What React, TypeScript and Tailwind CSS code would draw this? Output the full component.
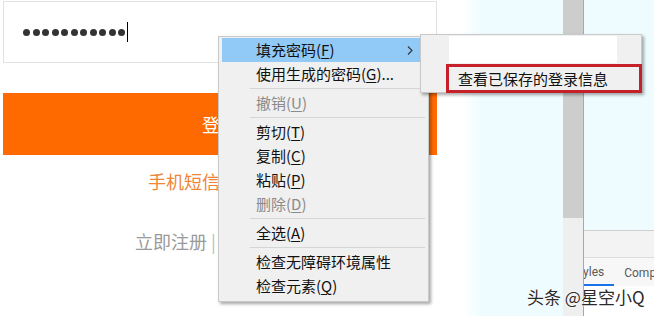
import React from "react"

const Key = ({ k }: { k: string }) => (
  <>
    (<span className="underline underline-offset-[2px] decoration-1">{k}</span>)
  </>
)

const menuItems = [
  { label: "填充密码", key: "F", active: true, sub: true },
  { label: "使用生成的密码", key: "G", tail: "..." },
  { sep: true },
  { label: "撤销", key: "U", disabled: true },
  { sep: true },
  { label: "剪切", key: "T" },
  { label: "复制", key: "C" },
  { label: "粘贴", key: "P" },
  { label: "删除", key: "D", disabled: true },
  { sep: true },
  { label: "全选", key: "A" },
  { sep: true },
  { label: "检查无障碍环境属性" },
  { label: "检查元素", key: "Q" },
]

const ContextMenu = () => (
  <div className="absolute left-[218px] top-[36px] w-[211px] bg-[#f0f0f0] border border-[#c9c9c9] shadow-[2px_2px_3px_rgba(0,0,0,0.35)] pt-[1px] pb-[3px] pl-[3px] pr-[2px]">
    {menuItems.map((it, i) =>
      it.sep ? (
        <div key={i} className="h-[5px] flex items-center">
          <div className="ml-[28px] mr-[1px] flex-1 h-px bg-[#d5d5d5]" />
        </div>
      ) : (
        <div
          key={i}
          className={`relative h-[24px] pl-[34px] flex items-center text-[15px] leading-[24px] ${
            it.active ? "bg-[#91c9f7]" : ""
          } ${it.disabled ? "text-[#8a8a8a]" : "text-[#111]"}`}
        >
          <span>
            {it.label}
            {it.key && <Key k={it.key} />}
            {it.tail}
          </span>
          {it.sub && (
            <svg className="absolute right-[13px] top-[8px]" width="6" height="9" viewBox="0 0 6 9">
              <path d="M1 0.5 L5 4.5 L1 8.5" fill="none" stroke="#333" strokeWidth="1.1" />
            </svg>
          )}
        </div>
      )
    )}
  </div>
)

const SubMenu = () => (
  <>
    <div className="absolute left-[420px] top-[34px] w-[222px] h-[59px] bg-[#f0f0f0] border border-[#c9c9c9] shadow-[2px_2px_3px_rgba(0,0,0,0.35)] pt-px pl-[28px]">
      <div className="w-[168px] h-[27px] bg-white" />
    </div>
    <div className="absolute left-[446px] top-[64px] w-[196px] h-[29px] border-[3px] border-[#c4212a] flex items-center pl-[9px] text-[15px] leading-[20px] text-[#111]">
      查看已保存的登录信息
    </div>
  </>
)

const LoginForm = () => (
  <div className="w-[434px] ml-[3px] pt-px flex flex-col">
    <div className="h-[62px] border border-[#e2e2e2] bg-white flex items-center pl-[19px]">
      <div className="flex items-center gap-[2.5px]">
        {Array.from({ length: 11 }).map((_, i) => (
          <div key={i} className="w-[7px] h-[7px] rounded-full bg-[#333]" />
        ))}
      </div>
      <div className="ml-[1.5px] w-px h-[20px] bg-black" />
    </div>
    <div className="mt-[30px] h-[62px] bg-[#ff6a00] flex items-center justify-center text-white text-[18px]">
      登录
    </div>
    <div className="mt-[14px] text-center text-[18px] leading-[24px] text-[#ee8538]">手机短信快捷登录</div>
    <div className="mt-[36px] pl-[132px] text-[18px] leading-[24px] text-[#9a9a9a] whitespace-nowrap">
      立即注册 <span className="text-[#bbb]">|</span> 忘记密码
    </div>
  </div>
)

const DevTools = () => (
  <div className="flex-1 min-w-0 border-l border-[#a8a8a8] flex flex-col font-['Roboto',sans-serif]">
    <div className="h-[231px] bg-[#effcff] border-b border-[#cfcfcf]" />
    <div className="h-[27px] bg-[#f3f3f3] border-b border-[#dcdcdc]" />
    <div className="h-[28px] bg-[#f7f7f7] overflow-hidden">
      <div className="ml-[-22px] flex h-full text-[12px] text-[#5a5a5a] whitespace-nowrap">
        <div className="px-[10px] flex items-center border-b-2 border-[#1a73e8] pt-[2px]">Styles</div>
        <div className="px-[10px] flex items-center pt-[2px]">Computed</div>
      </div>
    </div>
    <div className="flex-1 bg-white" />
  </div>
)

export default function App() {
  return (
    <div className="relative w-[654px] h-[316px] overflow-hidden flex font-['Noto_Sans_CJK_SC',sans-serif]">
      <div className="w-[563px] shrink-0 bg-[linear-gradient(to_right,#ffffff_462px,#effcff_482px)]">
        <LoginForm />
      </div>
      <div className="w-[20px] shrink-0 flex flex-col">
        <div className="h-[218px] bg-[#cdcdcd]" />
        <div className="flex-1 bg-[#efefef]" />
      </div>
      <DevTools />

      <ContextMenu />
      <SubMenu />

      <div className="absolute left-[527px] top-[286px] text-[17px] leading-[22px] text-[#2b2b2b] [text-shadow:0_0_2px_#fff,0_0_2px_#fff]">
        头条 @星空小Q
      </div>
    </div>
  )
}
